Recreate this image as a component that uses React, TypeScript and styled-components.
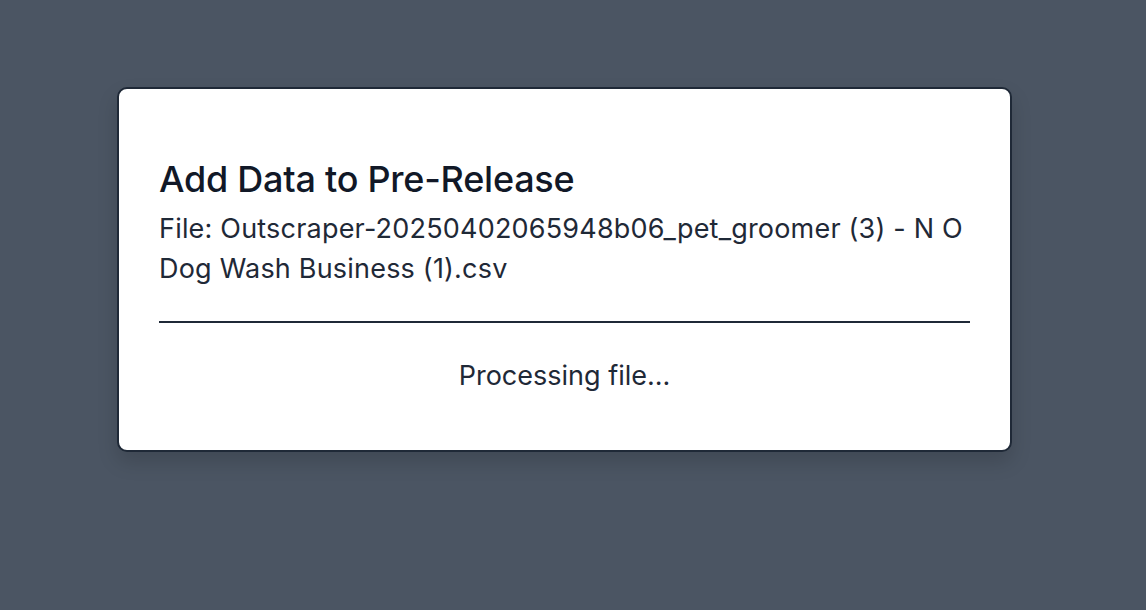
import * as React from 'react';
import styled, { createGlobalStyle } from 'styled-components';

const GlobalStyle = createGlobalStyle`
  html, body {
    margin: 0;
    padding: 0;
    background: #4b5563;
    font-family: Inter, "Noto Sans", sans-serif;
  }
`;

const Backdrop = styled.div`
  width: 1146px;
  height: 610px;
  background: #4b5563;
  padding-top: 87px;
  padding-right: 17px;
  box-sizing: border-box;
  display: flex;
  justify-content: center;
  align-items: flex-start;
`;

const Modal = styled.div`
  width: 895px;
  box-sizing: border-box;
  background: #ffffff;
  border: 2px solid #1f2937;
  border-radius: 10px;
  padding: 70px 40px 54px 40px;
  box-shadow: 0 10px 20px rgba(0, 0, 0, 0.15);
`;

const Title = styled.h2`
  margin: 0 0 10px 0;
  font-size: 36px;
  line-height: 40px;
  font-weight: 500;
  color: #111827;
  letter-spacing: -0.25px;
`;

const FileName = styled.p`
  margin: 0;
  font-size: 27px;
  line-height: 40px;
  color: #1f2937;
  letter-spacing: 0.2px;
`;

const Divider = styled.hr`
  border: none;
  border-top: 2px solid #1f2937;
  margin: 32px 0 0 0;
`;

const Status = styled.div`
  text-align: center;
  font-size: 27px;
  line-height: 40px;
  color: #1f2937;
  margin-top: 33px;
`;

const App = () => {
  return (
    <Backdrop>
      <GlobalStyle />
      <Modal>
        <Title>Add Data to Pre-Release</Title>
        <FileName>
          File: Outscraper-20250402065948b06_pet_groomer (3) - N O Dog Wash Business (1).csv
        </FileName>
        <Divider />
        <Status>Processing file...</Status>
      </Modal>
    </Backdrop>
  );
};

export default App;
